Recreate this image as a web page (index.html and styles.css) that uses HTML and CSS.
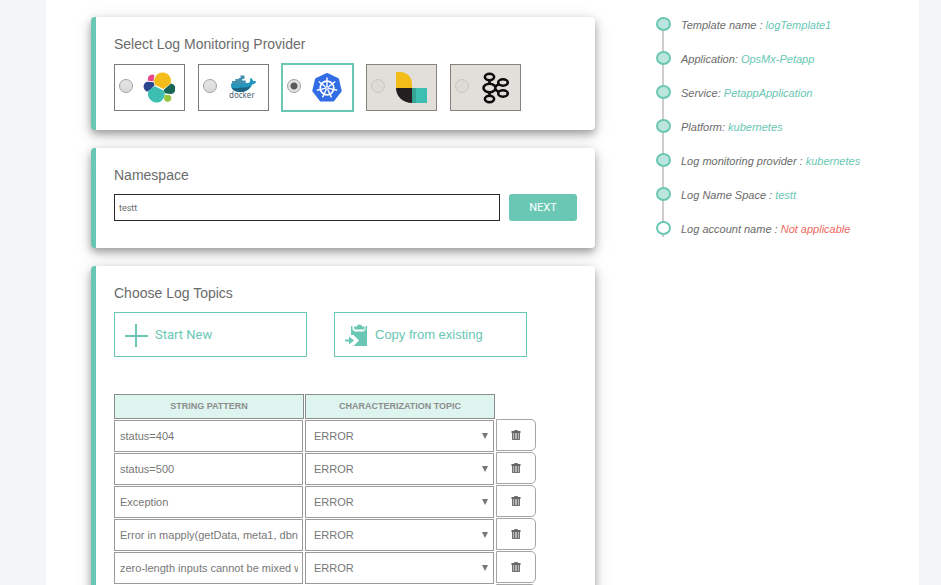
FILE: index.html
```html
<!DOCTYPE html>
<html lang="en">
<head>
<meta charset="utf-8">
<title>Log template</title>
<link rel="stylesheet" href="styles.css">
</head>
<body>
<main class="page">
  <div class="steps">
    <section class="card">
      <h2 class="card-title">Select Log Monitoring Provider</h2>
      <div class="providers">
        <label class="provider">
          <input type="radio" name="provider" aria-label="Elasticsearch">
          <svg class="logo" viewBox="0 0 32 32" aria-hidden="true">
            <path fill="#f4bd19" d="M12.300 5A8.200 8.200 0 0 1 20 .5a8.300 8.300 0 0 1 7.400 11.300L20.500 17l-8.700-4.200a9 9 0 0 1 .5-7.800z"/>
            <path fill="#3cbeb1" d="M6.500 16.800l5.500-2.500 9 4.500c2 4.500-.7 9.500-4.500 11.200A8.600 8.600 0 0 1 5 22.500a9 9 0 0 1 1.500-5.700z"/>
            <path fill="#e9478c" d="M4.800 7A4.500 4.500 0 0 1 11.300 3L10.600 9.300 4.900 8.800z"/>
            <path fill="#2c458f" d="M4.500 9.700l6 .5 1 3.300-7.300 6.200C-.8 18-.5 10.500 4.500 9.700z"/>
            <path fill="#95c63d" d="M21.700 22.800l5.300.5a3.700 3.700 0 1 1-6 3.500z"/>
            <path fill="#176655" d="M28 11.500a5.300 5.300 0 0 1-.5 10.500l-5.700-.8-1-3.500z"/>
          </svg>
        </label>
        <label class="provider">
          <input type="radio" name="provider" aria-label="Docker">
          <svg class="logo" viewBox="0 0 32 32" aria-hidden="true">
            <path fill="#2497bd" d="M4 11.500l17.500-.5c1.500-1 2-2.500 1.500-4.500L24 6c1.200.8 2 2 2.200 3.200 1-.3 2-.2 3 .3-.5 1.800-2 3-4 3C23.500 17 19.500 20 13.500 20 7 20 3.500 17 4 11.500z"/>
            <path fill="#1f6382" d="M4.500 15.500c3 .8 6 .9 9 0 3.500.4 7 0 10-1.500C21.500 18 18 20 13.500 20c-4.500 0-7.500-1.500-9-4.500z"/>
            <path fill="#4391b0" d="M5 9h3.300v3H5zM8.300 7h3.500v5H8.300zM11.800 6h3.500v6h-3.500zM15.300 8.500h3.500V12h-3.500zM13.500 3.500h4V7h-4z"/>
            <text class="logo-word" x="2" y="26">docker</text>
          </svg>
        </label>
        <label class="provider provider-selected">
          <input type="radio" name="provider" aria-label="Kubernetes" checked>
          <svg class="logo" viewBox="0 0 32 32" aria-hidden="true">
            <path fill="#326de6" stroke="#326de6" stroke-width="2" stroke-linejoin="round" d="M16 1.900l11 5.200 2.700 11.700-7.500 9.800H9.800L2.300 18.800 5 7.100z"/>
            <g fill="none" stroke="#fff">
              <circle cx="16" cy="16" r="6.800" stroke-width="1.700"/>
              <path stroke-width="1.400" d="M16 5.500V14M24.200 9.500l-6.600 5.200M26.200 18.300l-8.200-1.900M20.500 25.400l-3.600-7.600M11.500 25.400l3.600-7.600M5.800 18.300l8.200-1.900M7.800 9.500l6.600 5.200"/>
            </g>
            <circle cx="16" cy="16" r="2" fill="#fff"/>
            <circle cx="16" cy="16" r=".8" fill="#326de6"/>
          </svg>
        </label>
        <label class="provider provider-off">
          <input type="radio" name="provider" aria-label="Logstash" disabled>
          <svg class="logo" viewBox="0 0 32 32" aria-hidden="true">
            <path fill="#f3bd19" d="M1 0h4c7 0 12 5 12 12v4H1z"/>
            <path fill="#231f20" d="M1 16h16v15C8 31 1 24.500 1 16z"/>
            <path fill="#3cbeb1" d="M17 16h15v15H17z"/>
            <path fill="#37a595" d="M17 16h4v15h-4z"/>
          </svg>
        </label>
        <label class="provider provider-off">
          <input type="radio" name="provider" aria-label="Kafka" disabled>
          <svg class="logo" viewBox="0 0 32 32" aria-hidden="true">
            <g fill="none" stroke="#0c0c0c" stroke-width="2.600">
              <ellipse cx="10.500" cy="5" rx="4.600" ry="3.200"/>
              <ellipse cx="10.500" cy="16" rx="6" ry="4.300"/>
              <ellipse cx="10.500" cy="27" rx="4.600" ry="3.200"/>
              <ellipse cx="24" cy="10.500" rx="4.800" ry="3.200"/>
              <ellipse cx="24" cy="21.500" rx="4.800" ry="3.200"/>
              <path stroke-width="2.600" d="M10.500 8.500v3M10.500 20.500v3M16 14.300l4-2.200M16 17.700l4 2.200"/>
            </g>
          </svg>
        </label>
      </div>
    </section>

    <section class="card">
      <h2 class="card-title"><label for="namespace">Namespace</label></h2>
      <div class="namespace">
        <input class="namespace-input" id="namespace" type="text" value="testt">
        <button class="next" type="button">NEXT</button>
      </div>
    </section>

    <section class="card">
      <h2 class="card-title">Choose Log Topics</h2>
      <div class="choices">
        <button class="choice choice-new" type="button">
          <svg class="choice-icon" viewBox="0 0 24 24" aria-hidden="true"><path fill="none" stroke="#69c7b4" stroke-width="2" d="M12 1v23M1 13h23"/></svg>
          Start New
        </button>
        <button class="choice" type="button">
          <svg class="choice-icon" viewBox="0 0 24 24" aria-hidden="true">
            <path fill="#69c7b4" d="M7 3h1.500v3.500L10.500 8.500h9l2-2V3H23v20H9.500l5.500-5.500-5.500-5.500H7z"/>
            <path fill="#69c7b4" d="M10.500 6.500l-.5-3h3C13 .8 18 .8 18 3.500h2.500v3z"/>
            <path fill="#69c7b4" d="M1 16.500h4V13.500l5 4-5 4v-3H1z"/>
          </svg>
          Copy from existing
        </button>
      </div>
      <table class="topics">
        <thead>
          <tr>
            <th scope="col"><div class="topic-head">STRING PATTERN</div></th>
            <th scope="col"><div class="topic-head">CHARACTERIZATION TOPIC</div></th>
            <td></td>
          </tr>
        </thead>
        <tbody>
          <tr>
            <td><input class="pattern" type="text" aria-label="String pattern" value="status=404"></td>
            <td><div class="topic"><select aria-label="Characterization topic"><option>ERROR</option></select></div></td>
            <td class="remove-cell"><button class="remove" type="button" aria-label="Delete"><svg viewBox="0 0 10 12" aria-hidden="true"><use href="#trash"/></svg></button></td>
          </tr>
          <tr>
            <td><input class="pattern" type="text" aria-label="String pattern" value="status=500"></td>
            <td><div class="topic"><select aria-label="Characterization topic"><option>ERROR</option></select></div></td>
            <td class="remove-cell"><button class="remove" type="button" aria-label="Delete"><svg viewBox="0 0 10 12" aria-hidden="true"><use href="#trash"/></svg></button></td>
          </tr>
          <tr>
            <td><input class="pattern" type="text" aria-label="String pattern" value="Exception"></td>
            <td><div class="topic"><select aria-label="Characterization topic"><option>ERROR</option></select></div></td>
            <td class="remove-cell"><button class="remove" type="button" aria-label="Delete"><svg viewBox="0 0 10 12" aria-hidden="true"><use href="#trash"/></svg></button></td>
          </tr>
          <tr>
            <td><input class="pattern" type="text" aria-label="String pattern" value="Error in mapply(getData, meta1, dbna"></td>
            <td><div class="topic"><select aria-label="Characterization topic"><option>ERROR</option></select></div></td>
            <td class="remove-cell"><button class="remove" type="button" aria-label="Delete"><svg viewBox="0 0 10 12" aria-hidden="true"><use href="#trash"/></svg></button></td>
          </tr>
          <tr>
            <td><input class="pattern" type="text" aria-label="String pattern" value="zero-length inputs cannot be mixed w"></td>
            <td><div class="topic"><select aria-label="Characterization topic"><option>ERROR</option></select></div></td>
            <td class="remove-cell"><button class="remove" type="button" aria-label="Delete"><svg viewBox="0 0 10 12" aria-hidden="true"><use href="#trash"/></svg></button></td>
          </tr>
          <tr>
            <td><input class="pattern" type="text" aria-label="String pattern"></td>
            <td><div class="topic"><select aria-label="Characterization topic"><option>ERROR</option></select></div></td>
            <td class="remove-cell"><button class="remove" type="button" aria-label="Delete"><svg viewBox="0 0 10 12" aria-hidden="true"><use href="#trash"/></svg></button></td>
          </tr>
        </tbody>
      </table>
    </section>
  </div>

  <ul class="summary">
    <li>Template name : <span class="value">logTemplate1</span></li>
    <li>Application: <span class="value">OpsMx-Petapp</span></li>
    <li>Service: <span class="value">PetappApplication</span></li>
    <li>Platform: <span class="value">kubernetes</span></li>
    <li>Log monitoring provider : <span class="value">kubernetes</span></li>
    <li>Log Name Space : <span class="value">testt</span></li>
    <li class="pending">Log account name : <span class="value">Not applicable</span></li>
  </ul>
</main>

<svg class="symbols" aria-hidden="true">
  <symbol id="trash" viewBox="0 0 10 12">
    <path fill="#b5b5b5" d="M1 4h8v7H1z"/>
    <path fill="none" stroke="#707070" d="M3.500 2V1.500h3V2M1.500 4v6.500h7V4M3.500 4v6M6.500 4v6"/>
    <path fill="none" stroke="#666" stroke-width="2" d="M.5 3h9"/>
  </symbol>
</svg>
</body>
</html>
```
FILE: styles.css
```css
*,
*::before,
*::after {
  box-sizing: border-box;
}

body {
  margin: 0;
  background: #f4f5f7;
  color: #6b6b6b;
  font-family: "Liberation Sans", Arial, sans-serif;
  font-size: 11px;
}

input,
select,
button {
  margin: 0;
  font: inherit;
  color: inherit;
}

.symbols {
  display: none;
}

.page {
  display: grid;
  grid-template-columns: minmax(0, 504fr) minmax(0, 263fr);
  gap: 61px;
  margin: 0 22px 0 46px;
  padding: 17px 0 17px 45px;
  background: #fff;
}

.steps {
  display: flex;
  flex-direction: column;
  gap: 18px;
}

.card {
  padding: 17px 18px 18px;
  border-left: 5px solid #69c7b4;
  border-radius: 4px;
  background: #fff;
  box-shadow: 0 4px 8px rgba(0, 0, 0, 0.35), 0 4px 20px rgba(0, 0, 0, 0.1);
}

.card-title {
  margin: 0 0 9px;
  font-size: 14px;
  font-weight: normal;
  line-height: 20px;
}

.providers {
  display: flex;
  gap: 13px;
  padding: 1px 0;
}

.provider {
  display: flex;
  align-items: center;
  width: 71px;
  height: 47px;
  padding: 0 4px;
  gap: 10px;
  border: 1px solid #7a7a7a;
}

.provider-selected {
  border-color: #69c7b4;
  box-shadow: 0 0 0 1px #69c7b4;
}

.provider-off {
  background: #e2dfda;
  border-color: #85817d;
}

.provider input {
  appearance: none;
  flex: none;
  width: 14px;
  height: 14px;
  margin-bottom: 3px;
  border: 1px solid #a0a0a0;
  border-radius: 50%;
  background: linear-gradient(#e6e6e6, #d9d9d9);
}

.provider input:checked {
  background: radial-gradient(circle, #5a5a5a 3px, #e2e2e2 4px);
}

.provider input:disabled {
  border-color: #c8c5c1;
  background: #dedbd6;
}

.logo {
  flex: none;
  width: 32px;
  height: 32px;
}

.logo-word {
  fill: #4c6674;
  font-family: "Noto Sans", sans-serif;
  font-size: 8px;
}

.namespace {
  display: flex;
  gap: 9px;
  margin-bottom: 9px;
}

.namespace-input {
  flex: 1;
  min-width: 0;
  height: 27px;
  padding: 0 4px;
  border: 1px solid #2b272b;
  border-radius: 0;
  background: #fff;
  font-family: Roboto, sans-serif;
  font-size: 9px;
}

.next {
  width: 68px;
  border: 0;
  border-radius: 3px;
  background: #69c7b4;
  color: #fff;
  font-family: Roboto, sans-serif;
}

.choices {
  display: flex;
  gap: 27px;
  margin-bottom: 37px;
}

.choice {
  display: flex;
  align-items: center;
  gap: 7px;
  width: 193px;
  height: 45px;
  padding: 0 9px;
  border: 1px solid #69c7b4;
  background: #fff;
  color: #69c7b4;
  font-size: 13px;
}

.choice-new {
  font-family: Roboto, sans-serif;
}

.choice-icon {
  width: 24px;
  height: 24px;
}

.topics {
  border-spacing: 0;
  color: #777;
}

.topics th {
  padding: 0 1px 0 0;
}

.topics td {
  padding: 1px 2px 0 0;
}

.topics .remove-cell {
  padding: 0 0 1px;
}

.topic-head {
  width: 190px;
  border: 1px solid #8c8c8c;
  background: #def5ef;
  color: #8c8c8c;
  font-size: 9px;
  line-height: 23px;
}

.pattern,
.topic select {
  display: block;
  width: 189px;
  height: 32px;
  border: 1px solid #9b9b9b;
  border-radius: 0;
  background: #fff;
}

.pattern {
  padding: 0 4px 0 5px;
}

.topic {
  position: relative;
}

.topic select {
  appearance: none;
  padding: 0 8px;
}

.topic::after {
  content: "";
  position: absolute;
  top: 13px;
  right: 6px;
  border: 3px solid transparent;
  border-top: 6px solid #777;
  border-bottom: 0;
  pointer-events: none;
}

.remove {
  display: flex;
  align-items: center;
  justify-content: center;
  width: 40px;
  height: 32px;
  padding: 0;
  border: 1px solid #a5a5a5;
  border-radius: 0 5px 5px 0;
  background: #fff;
}

.remove svg {
  width: 10px;
  height: 12px;
}

.summary {
  margin: 0;
  padding: 0;
  list-style: none;
  font-style: italic;
}

.summary li {
  position: relative;
  padding: 0 0 18px 25px;
  line-height: 16px;
}

.summary li::before {
  content: "";
  position: absolute;
  top: 0;
  bottom: 0;
  left: 6px;
  width: 2px;
  background: #d0cccc;
}

.summary li::after {
  content: "";
  position: absolute;
  top: 0;
  left: 0;
  width: 15px;
  height: 14px;
  border: 2px solid #69c7b4;
  border-radius: 50%;
  background: #bce6dd;
}

.summary .pending {
  padding-bottom: 0;
}

.summary .pending::after {
  background: #fff;
}

.value {
  color: #69c7b4;
}

.pending .value {
  color: #ee6a5f;
}
```
